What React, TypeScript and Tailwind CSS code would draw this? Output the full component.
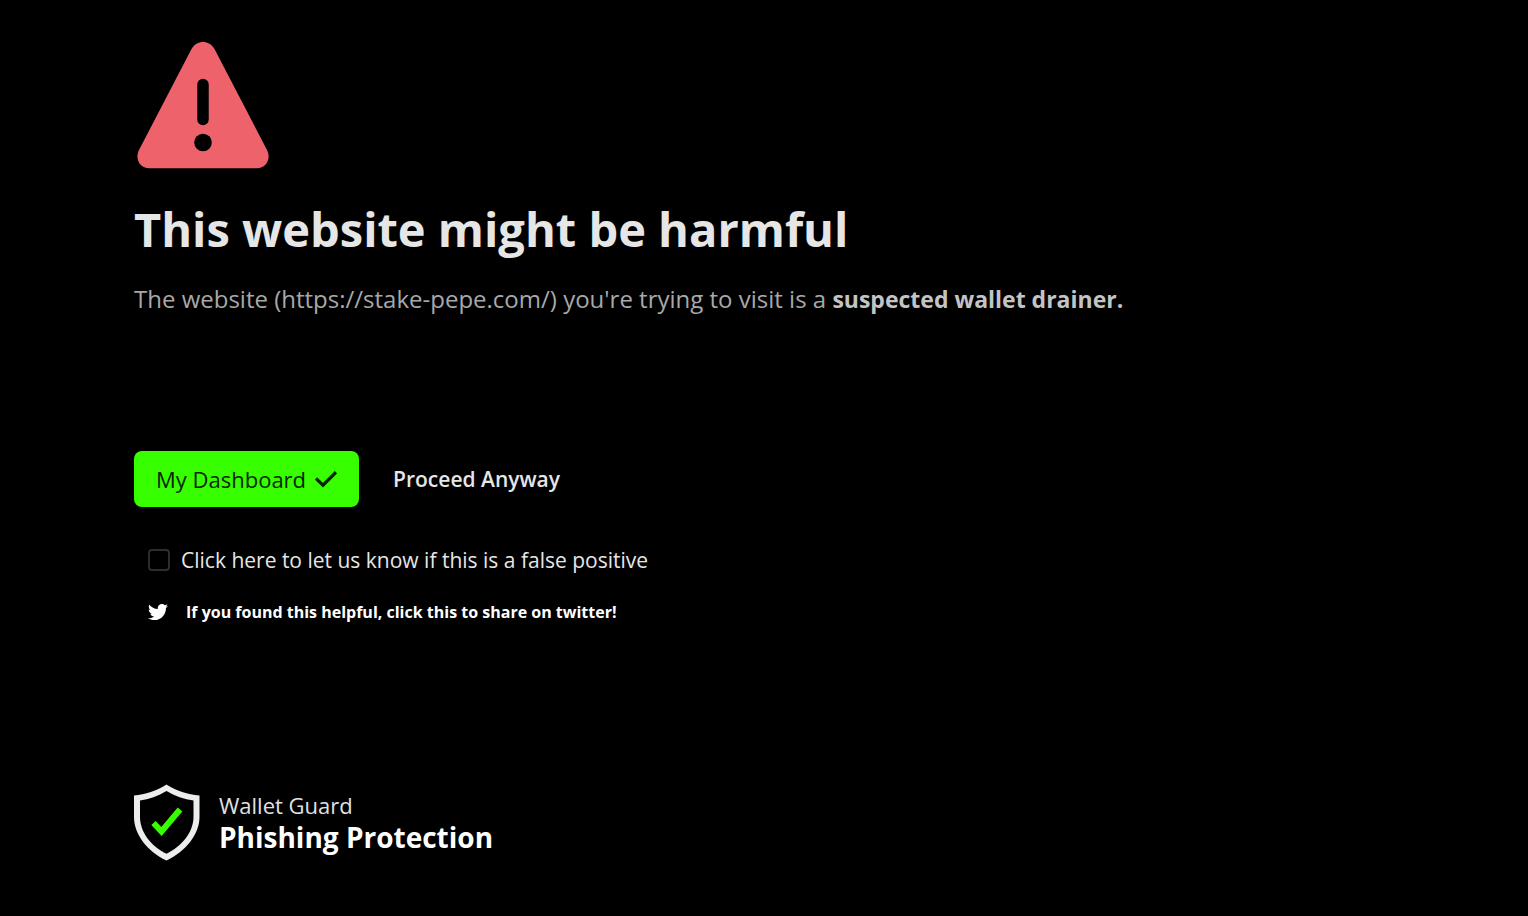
import { FaTwitter } from "react-icons/fa";

export default function App() {
  return (
    <div className="min-h-screen bg-black px-[134px] pt-[41px] pb-12 font-['Open_Sans','Noto_Sans',sans-serif] text-[#e6e6e6]">
      <main>
        <svg className="ml-[3px] h-32 w-[132px]" viewBox="0 0 132 128" role="img" aria-label="Warning">
          <path fill="#ee636b" d="M54.500 8C59.500-1.500 72.500-1.500 77.500 8L130 109C134.500 118 129 127.300 120 127.300H12C3 127.300-2.500 118 2 109Z" />
          <path d="M66 43.500V78.500" stroke="#000" strokeWidth="11.500" strokeLinecap="round" />
          <circle cx="66" cy="101.500" r="8.800" />
        </svg>
        <h1 className="mt-7 text-[47px] leading-16 font-bold">This website might be harmful</h1>
        <p className="mt-5 text-[24px] leading-9 text-[#a8a8a8]">
          The website (https://stake-pepe.com/) you're trying to visit is a{" "}
          <strong className="text-[23px] font-bold text-[#c4c4c4]">suspected wallet drainer.</strong>
        </p>
        <div className="mt-[134px] flex items-center gap-[34px]">
          <button type="button" className="flex h-14 items-center gap-[9px] rounded-lg bg-[#37ff00] px-[22px] text-[22px] font-medium text-[#062606]">
            My Dashboard
            <svg className="h-[22px] w-[22px]" viewBox="0 0 22 22" fill="none" stroke="#082408" strokeWidth="3.200" aria-hidden="true">
              <path d="M1 10.500L8 17.200L21 4.200" />
            </svg>
          </button>
          <button type="button" className="text-[21px] leading-8 font-semibold">Proceed Anyway</button>
        </div>
        <label className="mt-[35px] ml-[14px] flex w-fit items-center gap-[11px] text-[21px] leading-9">
          <input type="checkbox" className="h-[22px] w-[22px] appearance-none rounded-sm border-2 border-[#2d2d2d]" />
          Click here to let us know if this is a false positive
        </label>
        <a href="#share" className="mt-[22px] ml-[14px] flex w-fit items-center gap-[18px] text-[16px] leading-6 font-bold text-white">
          <FaTwitter className="h-5 w-5" aria-hidden="true" />
          If you found this helpful, click this to share on twitter!
        </a>
      </main>
      <footer className="mt-40 flex items-center gap-[19px]">
        <svg className="h-[77px] w-[66px]" viewBox="0 0 66 77" fill="none" aria-hidden="true">
          <path fill="#ededed" fillRule="evenodd" d="M32.500 0.500C23 7 11 10.500 0 11.500V33C0 50 13 67.500 32.500 76.500C52 67.500 65.500 50 65.500 33V11.500C54 10.500 42 7 32.500 0.500ZM32.500 7C41 12.200 50 15.500 59.500 16.500V33C59.500 47.500 48.500 62 32.500 69.700C16.500 62 6 47.500 6 33V16.500C15 15.500 24 12.200 32.500 7Z" />
          <path d="M19.500 39L27.500 47.500L46 25.500" stroke="#37ff00" strokeWidth="6" />
        </svg>
        <div className="pb-1">
          <p className="text-[22px] leading-8 text-[#e0e0e0]">Wallet Guard</p>
          <p className="text-[28px] leading-8 font-bold text-white">Phishing Protection</p>
        </div>
      </footer>
    </div>
  );
}
